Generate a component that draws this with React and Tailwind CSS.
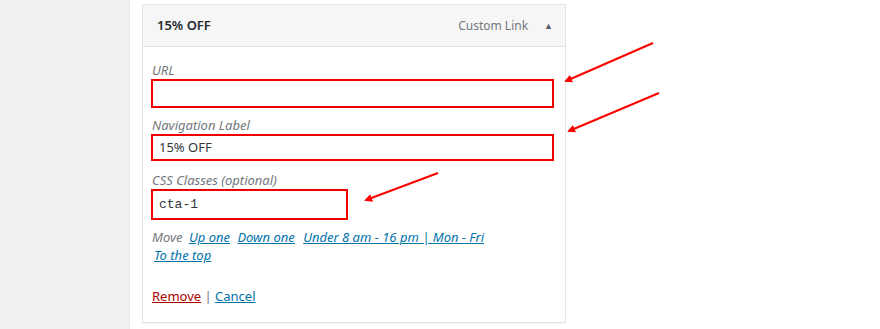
import React from "react";

export default function App() {
  const font = { fontFamily: '"Noto Sans", "Open Sans", sans-serif' };
  return (
    <div className="relative flex w-[880px] h-[329px] overflow-hidden bg-white" style={font}>
      <div className="w-[130px] h-full bg-[#f1f1f1] border-r border-[#e8e8e8] shrink-0" />
      <div className="pl-[12px] pt-[4px]">
        <div className="w-[424px] h-[319px] border border-[#e5e5e5] shadow-[0_1px_1px_rgba(0,0,0,0.04)] bg-white flex flex-col">
          <div className="h-[42px] bg-[#f6f6f6] border-b border-[#e2e2e2] flex items-center pl-[14px] pr-[12px] shrink-0">
            <span className="text-[13px] font-semibold text-[#23282d]">15% OFF</span>
            <span className="ml-auto text-[12px] text-[#72777c]">Custom Link</span>
            <span className="ml-[16px] text-[9px] text-[#555d66] leading-none">▲</span>
          </div>
          <div className="pl-[8px] pr-[11px] pt-[14px] flex flex-col">
            <label className="pl-[1px] text-[13px] italic text-[#72777c] leading-[18px]">URL</label>
            <div className="h-[29px] w-full border-2 border-[#f20000] bg-white" />
            <label className="mt-[8px] pl-[1px] text-[13px] italic text-[#72777c] leading-[18px]">Navigation Label</label>
            <div className="h-[27px] w-full border-2 border-[#f20000] bg-white flex items-center pl-[6px] text-[13px] text-[#32373c]">15% OFF</div>
            <label className="mt-[10px] pl-[1px] text-[13px] italic text-[#72777c] leading-[18px]">CSS Classes (optional)</label>
            <div className="h-[31px] w-[197px] border-2 border-[#f20000] bg-white flex items-center pl-[6px] text-[13px] text-[#32373c]" style={{ fontFamily: '"Liberation Mono", "DejaVu Sans Mono", monospace' }}>cta-1</div>
            <div className="mt-[8px] pl-[1px] text-[13px] italic leading-[18px] text-[#72777c]">
              Move{" "}
              <a className="ml-[3px] text-[#0073aa] underline">Up one</a>{" "}
              <a className="ml-[4px] text-[#0073aa] underline">Down one</a>{" "}
              <a className="ml-[5px] text-[#0073aa] underline">Under 8 am - 16 pm | Mon - Fri</a>
            </div>
            <div className="pl-[3px] text-[13px] italic leading-[18px]">
              <a className="text-[#0073aa] underline">To the top</a>
            </div>
            <div className="mt-[23px] pl-[1px] text-[13px] leading-[18px] text-[#72777c]">
              <a className="text-[#a00] underline">Remove</a> | <a className="text-[#0073aa] underline">Cancel</a>
            </div>
          </div>
        </div>
      </div>
      <svg className="absolute inset-0 pointer-events-none" width="880" height="329">
        <defs>
          <marker id="ah" markerWidth="8" markerHeight="8" refX="6" refY="4" orient="auto" markerUnits="userSpaceOnUse">
            <path d="M0,0 L8,4 L0,8 Z" fill="#f00" />
          </marker>
        </defs>
        <line x1="653" y1="43" x2="566" y2="81" stroke="#f00" strokeWidth="2" markerEnd="url(#ah)" />
        <line x1="659" y1="93" x2="569" y2="131" stroke="#f00" strokeWidth="2" markerEnd="url(#ah)" />
        <line x1="438" y1="173" x2="366" y2="200" stroke="#f00" strokeWidth="2" markerEnd="url(#ah)" />
      </svg>
    </div>
  );
}
